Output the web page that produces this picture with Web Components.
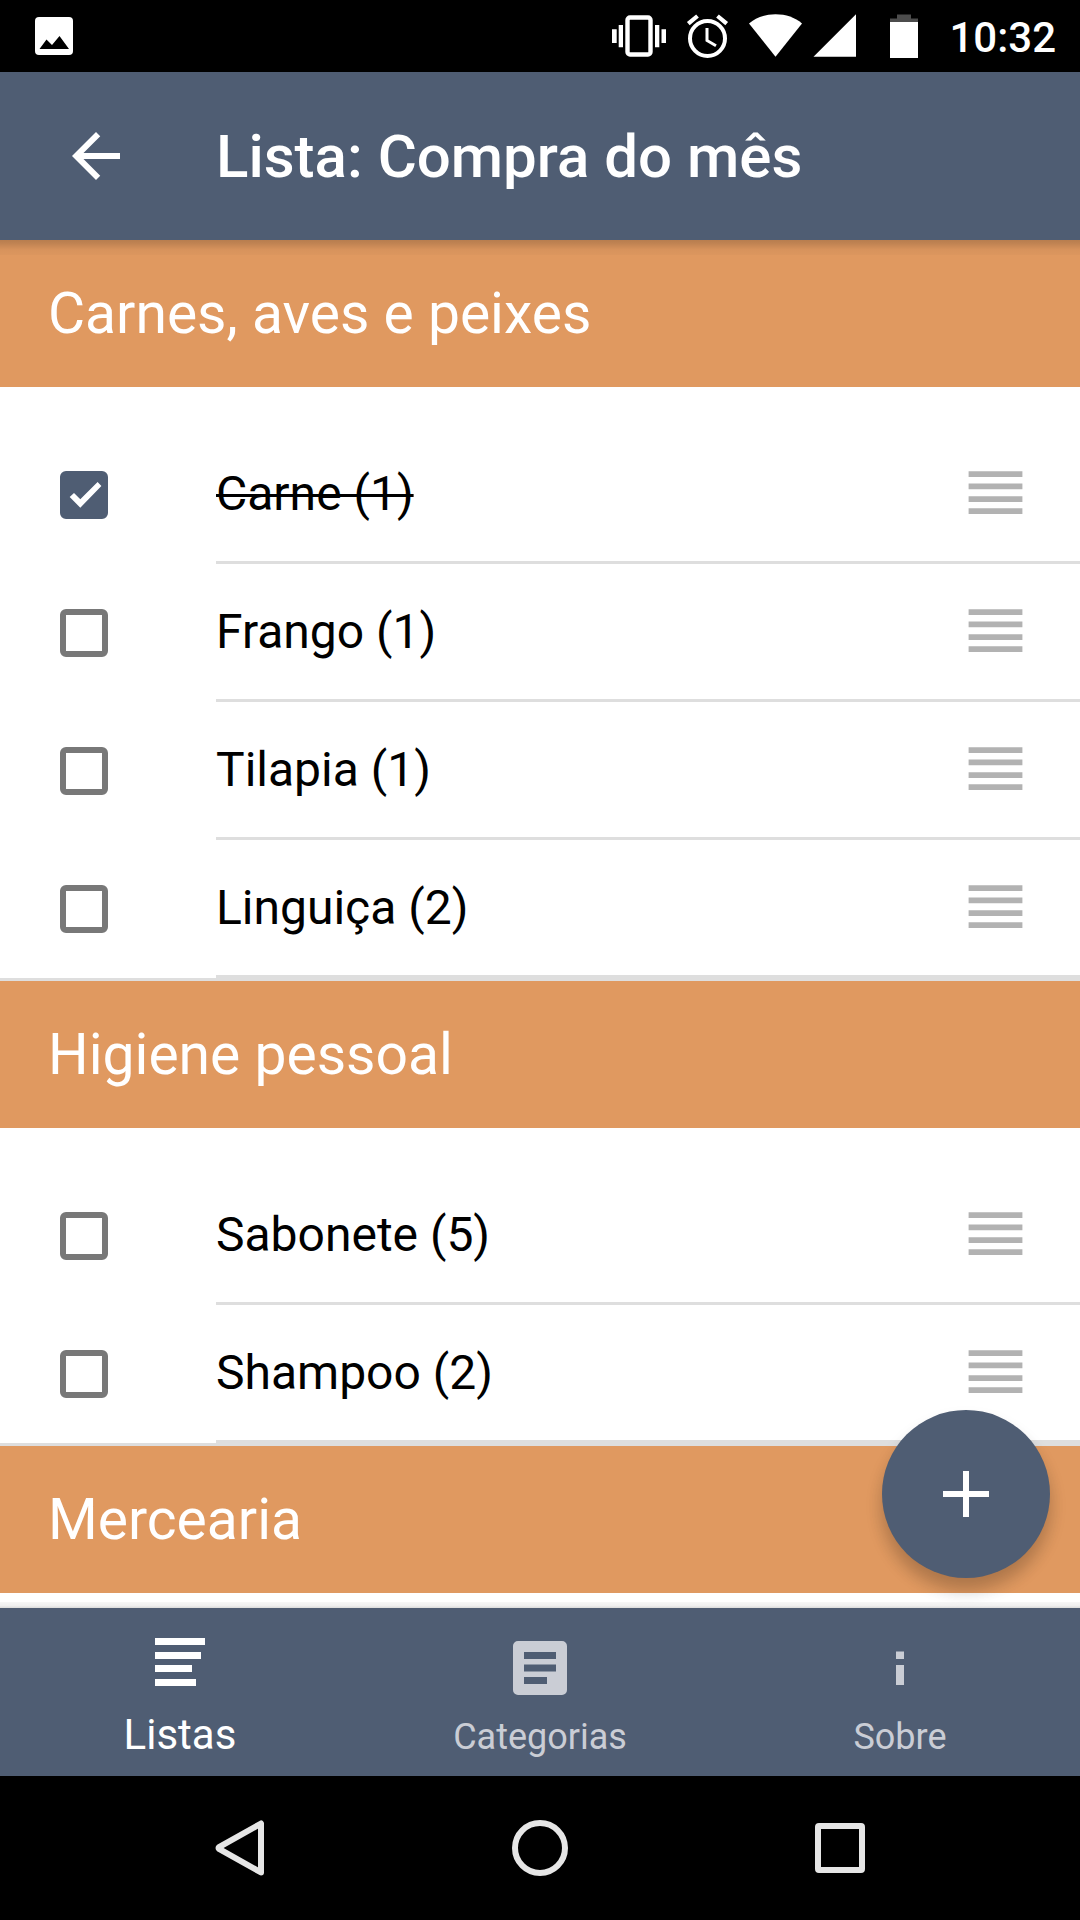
<!DOCTYPE html>
<html lang="pt-BR">
<head>
<meta charset="utf-8">
<meta name="viewport" content="width=device-width, initial-scale=1">
<title>Lista: Compra do mês</title>
<style>
  :root {
    --primary: #4f5d73;
    --accent: #e09960;
    --line: #dedede;
    --muted: #cacdd5;
  }
  body {
    margin: 0;
    background: #fff;
    font-family: Roboto, "Noto Sans", sans-serif;
  }
</style>
</head>
<body>
<shopping-app>
  <status-bar slot="status">10:32</status-bar>
  <app-header slot="header">Lista: Compra do mês</app-header>

  <list-section heading="Carnes, aves e peixes">
    <list-item checked>Carne (1)</list-item>
    <list-item>Frango (1)</list-item>
    <list-item>Tilapia (1)</list-item>
    <list-item>Linguiça (2)</list-item>
  </list-section>
  <list-section heading="Higiene pessoal">
    <list-item>Sabonete (5)</list-item>
    <list-item>Shampoo (2)</list-item>
  </list-section>
  <list-section heading="Mercearia"></list-section>

  <add-button slot="fab"></add-button>

  <tab-bar slot="tabs">
    <tab-item active>
      <svg slot="icon" width="60" height="60" viewBox="0 0 60 60" fill="currentColor" aria-hidden="true">
        <path d="M5 0h50v7H5zM5 14h46v7H5zM5 27h37v7H5zM5 41h41v7H5z"/>
      </svg>
      Listas
    </tab-item>
    <tab-item>
      <svg slot="icon" width="60" height="60" viewBox="0 0 60 60" fill="currentColor" fill-rule="evenodd" aria-hidden="true">
        <path d="M8 3h44a5 5 0 0 1 5 5v44a5 5 0 0 1-5 5H8a5 5 0 0 1-5-5V8a5 5 0 0 1 5-5zM14 14v7h32v-7zM14 26.500v7h32v-7zM14 39v7h23v-7z"/>
      </svg>
      Categorias
    </tab-item>
    <tab-item>
      <svg slot="icon" width="60" height="60" viewBox="0 0 60 60" fill="currentColor" aria-hidden="true">
        <path d="M26 13.500h8V21h-8zM26 27h8v20h-8z"/>
      </svg>
      Sobre
    </tab-item>
  </tab-bar>

  <system-nav slot="nav"></system-nav>
</shopping-app>

<script>
const define = (name, html, setup) => {
  const template = document.createElement('template');
  template.innerHTML = html;
  customElements.define(name, class extends HTMLElement {
    connectedCallback() {
      if (this.shadowRoot) return;
      this.attachShadow({ mode: 'open' }).append(template.content.cloneNode(true));
      if (setup) setup(this, this.shadowRoot);
    }
  });
};

define('shopping-app', `
  <style>
    :host { display: flex; flex-direction: column; height: 100vh; }
    .view { position: relative; flex: 1; min-height: 0; display: flex; flex-direction: column; }
    main { flex: 1; min-height: 0; overflow-y: auto; scrollbar-width: none; }
    .view::before, .view::after { content: ""; position: absolute; left: 0; right: 0; pointer-events: none; }
    /* soft edges where the bars float over the list */
    .view::before { top: 0; height: 15px; background: linear-gradient(rgba(0,0,0,.18), rgba(0,0,0,.15) 20%, rgba(0,0,0,.04) 66%, rgba(0,0,0,.02)); }
    .view::after { bottom: 0; height: 6px; background: linear-gradient(rgba(0,0,0,.03), rgba(0,0,0,.06) 60%, rgba(0,0,0,.14)); }
    slot[name="fab"]::slotted(*) { position: absolute; right: 30px; bottom: 30px; }
  </style>
  <slot name="status"></slot>
  <slot name="header"></slot>
  <div class="view">
    <main><slot></slot></main>
    <slot name="fab"></slot>
  </div>
  <slot name="tabs"></slot>
  <slot name="nav"></slot>
`);

define('status-bar', `
  <style>
    :host { display: flex; justify-content: space-between; align-items: center; height: 72px; padding: 0 24px 0 35px; background: #000; color: #fff; }
    .icons { display: flex; align-items: center; gap: 20px; }
    .time { margin: 4px 0 0 11px; font-size: 42px; line-height: 72px; font-weight: 500; }
    svg { display: block; overflow: visible; }
  </style>
  <svg width="38" height="72" viewBox="0 0 38 72" aria-hidden="true">
    <rect y="17" width="38" height="38" rx="4" fill="#fff"/>
    <path d="M4.500 49 11.500 39.500 17 45 24.500 36 34 49z" fill="#000"/>
  </svg>
  <div class="icons">
    <svg width="54" height="72" viewBox="0 0 54 72" fill="#fff" aria-hidden="true">
      <path d="M0 29.300h4.700V43H0zM6.700 25H11v22.300H6.700zM43 25h4.300v22.300H43zM49.500 29.300H54V43h-4.500z"/>
      <rect x="15.500" y="17.500" width="23" height="37" rx="2.500" fill="none" stroke="#fff" stroke-width="4.400"/>
    </svg>
    <svg width="44" height="72" viewBox="0 0 44 72" fill="none" stroke="#fff" aria-hidden="true">
      <circle cx="21.500" cy="38.500" r="17.500" stroke-width="4"/>
      <path d="M2.300 23.700 11.500 16M40.700 23.700 31.500 16" stroke-width="4.200"/>
      <path d="M21 28v12.500l9 5.300" stroke-width="3"/>
    </svg>
    <svg width="106" height="72" viewBox="0 0 106 72" fill="#fff" aria-hidden="true">
      <path d="M25.500 56.700-1 23.500C6 17.500 15 14.300 25.500 14.300S45 17.500 52 23.500z"/>
      <path d="M63.500 56.700 106 14.300v42.400z"/>
    </svg>
    <svg width="42" height="72" viewBox="0 0 42 72" aria-hidden="true">
      <path d="M14 18.500h7v-4h14v4h7V22H14z" fill="#4c4c4c"/>
      <path d="M14 22h28v36H14z" fill="#fff"/>
    </svg>
    <span class="time"><slot></slot></span>
  </div>
`);

define('app-header', `
  <style>
    :host { display: flex; align-items: center; gap: 84px; height: 168px; padding: 0 60px; background: var(--primary); color: #fff; }
    button { flex: none; width: 72px; height: 72px; padding: 0; border: 0; background: none; color: inherit; }
    svg { display: block; }
    h1 { margin: 0; padding-top: 2px; font-size: 60px; line-height: 72px; font-weight: 500; white-space: nowrap; }
  </style>
  <button type="button" aria-label="Voltar">
    <svg width="72" height="72" viewBox="0 0 24 24" fill="currentColor" aria-hidden="true">
      <path d="M20 11H7.830l5.590-5.590L12 4l-8 8 8 8 1.410-1.410L7.830 13H20z"/>
    </svg>
  </button>
  <h1><slot></slot></h1>
`);

define('list-section', `
  <style>
    :host { display: block; border-bottom: 3px solid var(--line); }
    h2 { margin: 0; padding: 0 48px; font-size: 57px; line-height: 147px; font-weight: 400; background: var(--accent); color: #fff; }
    .items { padding-top: 39px; }
  </style>
  <h2></h2>
  <div class="items"><slot></slot></div>
`, (host, root) => {
  root.querySelector('h2').textContent = host.getAttribute('heading');
});

define('list-item', `
  <style>
    :host { display: flex; align-items: center; height: 138px; padding-left: 60px; gap: 108px; color: #000; }
    .box { display: grid; flex: none; width: 48px; height: 48px; }
    .box > * { grid-area: 1 / 1; }
    input { appearance: none; box-sizing: border-box; width: 48px; height: 48px; margin: 0; border: 6px solid #787878; border-radius: 6px; background: #fff; }
    input:checked { border-color: var(--primary); background: var(--primary); }
    .box svg { visibility: hidden; pointer-events: none; }
    input:checked + svg { visibility: visible; }
    .inner { flex: 1; display: flex; align-items: center; justify-content: space-between; box-sizing: border-box; height: 138px; border-bottom: 3px solid var(--line); padding-right: 57px; }
    label { font-size: 48px; line-height: 57px; }
    :host([checked]) label { text-decoration: line-through; text-decoration-thickness: 3px; }
    button { padding: 0; border: 0; background: none; color: #b2b2b2; }
    svg { display: block; }
  </style>
  <span class="box">
    <input type="checkbox" id="done">
    <svg width="48" height="48" viewBox="0 0 48 48" aria-hidden="true">
      <path d="M9.700 26 14 21.900l6.300 6.300L37.600 11l3.800 4-21.100 21.800z" fill="#fff"/>
    </svg>
  </span>
  <div class="inner">
    <label for="done"><slot></slot></label>
    <button type="button" aria-label="Reordenar">
      <svg width="55" height="45" viewBox="0 0 55 45" fill="currentColor" aria-hidden="true">
        <path d="M.600.300h53.800V6H.600zM.600 12.400h53.800v5.800H.600zM.600 25.300h53.800V31H.600zM.600 37.300h53.800V43H.600z"/>
      </svg>
    </button>
  </div>
`, (host, root) => {
  const box = root.querySelector('input');
  box.checked = host.hasAttribute('checked');
  box.addEventListener('change', () => host.toggleAttribute('checked', box.checked));
});

define('add-button', `
  <style>
    :host { display: block; }
    button { display: grid; place-items: center; width: 168px; height: 168px; padding: 0; border: 0; border-radius: 50%; background: var(--primary); color: #fff; box-shadow: 0 12px 18px rgba(0,0,0,.14), 0 12px 15px rgba(0,0,0,.1); }
  </style>
  <button type="button" aria-label="Adicionar">
    <svg width="46" height="46" viewBox="0 0 46 46" fill="currentColor" aria-hidden="true">
      <path d="M20 0h6v20h20v6H26v20h-6V26H0v-6h20z"/>
    </svg>
  </button>
`);

define('tab-bar', `
  <style>
    :host { display: block; background: var(--primary); }
    nav { display: grid; grid-template-columns: repeat(3, 1fr); height: 168px; }
  </style>
  <nav><slot></slot></nav>
`);

define('tab-item', `
  <style>
    :host { display: block; color: var(--muted); font-size: 36px; line-height: 54px; }
    :host([active]) { color: #fff; font-size: 42px; line-height: 50px; }
    a { display: flex; flex-direction: column; align-items: center; gap: 12px; padding-top: 30px; color: inherit; text-decoration: none; }
  </style>
  <a href="#"><slot name="icon"></slot><span><slot></slot></span></a>
`);

define('system-nav', `
  <style>
    :host { display: grid; grid-template-columns: repeat(3, 300px); justify-content: center; height: 144px; background: #000; }
    button { display: grid; place-items: center; padding: 0; border: 0; background: none; color: #e6e6e6; }
    svg { fill: none; stroke: currentColor; stroke-width: 6; stroke-linejoin: round; }
  </style>
  <button type="button" aria-label="Voltar">
    <svg width="56" height="56" viewBox="0 0 56 56"><path d="M49 3.500v49L7 28.800q-1-.800 0-1.600z"/></svg>
  </button>
  <button type="button" aria-label="Início">
    <svg width="56" height="56" viewBox="0 0 56 56"><circle cx="28" cy="28" r="25"/></svg>
  </button>
  <button type="button" aria-label="Recentes">
    <svg width="56" height="56" viewBox="0 0 56 56"><rect x="6" y="6" width="44" height="44" rx="1"/></svg>
  </button>
`);
</script>
</body>
</html>
